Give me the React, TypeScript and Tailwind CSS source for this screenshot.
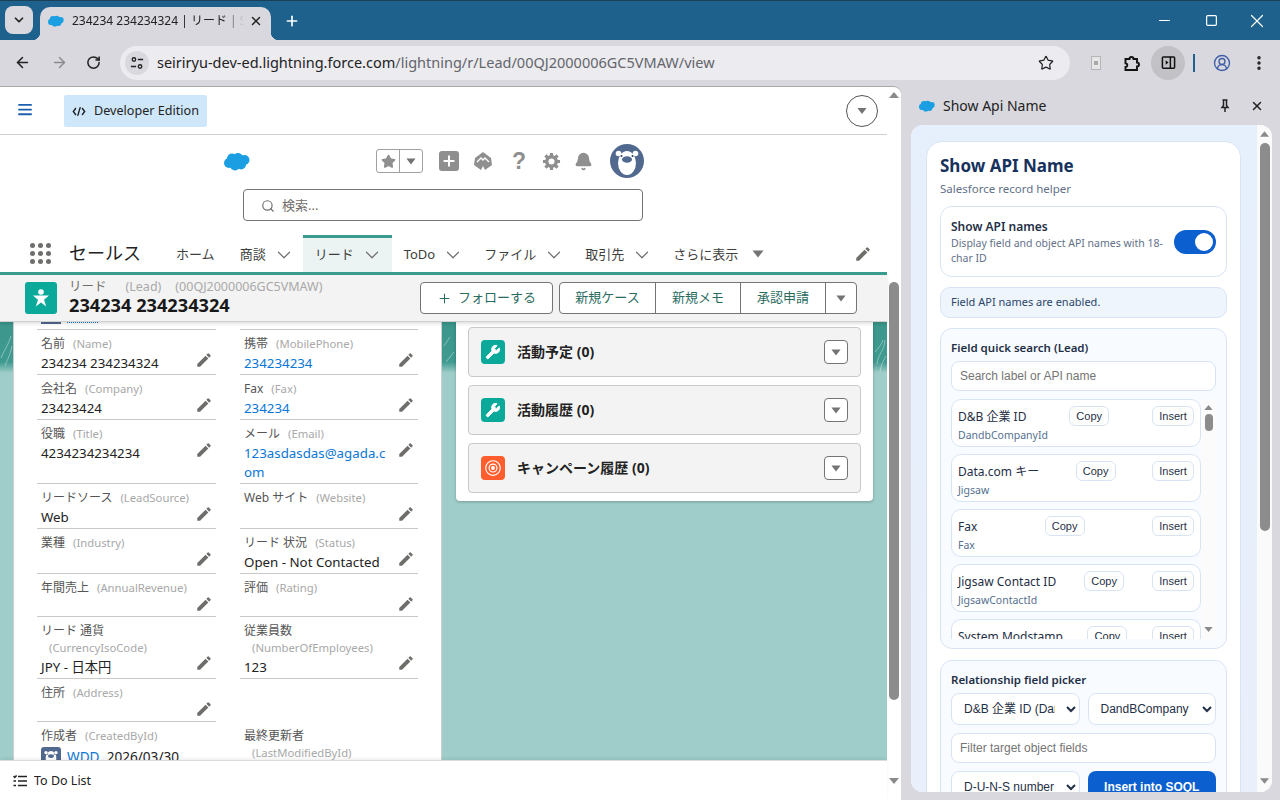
import React from "react";
import {
  ArrowLeft,
  ArrowRight,
  Bell,
  ChevronDown,
  CircleUserRound,
  EllipsisVertical,
  Minus,
  Plus,
  RotateCw,
  Search,
  Square,
  Star,
  Wrench,
  X,
} from "lucide-react";

const uiFont = "font-['Noto_Sans','Noto_Sans_CJK_JP',sans-serif]";
const arialFont = "font-['Liberation_Sans','Noto_Sans_CJK_JP',sans-serif]";

function Cloud({ className }: { className?: string }) {
  return (
    <svg viewBox="0 0 26 19" className={className} fill="#1b9fe2">
      <circle cx="8" cy="6.5" r="5" />
      <circle cx="14" cy="6" r="5" />
      <circle cx="20.5" cy="8" r="5" />
      <circle cx="5" cy="11" r="5" />
      <circle cx="11" cy="13.5" r="5" />
      <circle cx="17" cy="12.5" r="5" />
    </svg>
  );
}

function Caret({ className = "" }: { className?: string }) {
  return (
    <svg viewBox="0 0 12 8" className={className} fill="#747474">
      <path d="M0.5 0.5h11L6 7.5z" />
    </svg>
  );
}

function Pencil() {
  return (
    <svg viewBox="0 0 24 24" className="h-[18px] w-[18px]" fill="#706e6b">
      <path d="M3 17.25V21h3.75L17.81 9.94l-3.75-3.75L3 17.25zM20.71 7.04a1 1 0 0 0 0-1.41l-2.34-2.34a1 1 0 0 0-1.41 0l-1.83 1.83 3.75 3.75 1.83-1.83z" />
    </svg>
  );
}

function Bear({ className }: { className?: string }) {
  return (
    <svg viewBox="0 0 34 34" className={className}>
      <circle cx="17" cy="17" r="17" fill="#51688f" />
      <circle cx="8.5" cy="9.5" r="2.8" fill="#fff" />
      <circle cx="25.5" cy="9.5" r="2.8" fill="#fff" />
      <ellipse cx="17" cy="19" rx="9" ry="12" fill="#fff" />
      <circle cx="11.5" cy="12" r="1" fill="#263a5c" />
      <circle cx="22.5" cy="12" r="1" fill="#263a5c" />
      <ellipse cx="17" cy="15.5" rx="5" ry="3.2" fill="#51688f" />
    </svg>
  );
}

function BrowserBar() {
  return (
    <div className="shrink-0">
      <div className="flex h-10 items-center border-t border-[#1c3f58] bg-[#1d618c]">
        <div className="ml-[5px] mt-[5px] flex h-7 w-7 items-center justify-center self-start rounded-lg bg-[#d9d8de]">
          <ChevronDown size={14} strokeWidth={3} color="#222" />
        </div>
        <div className="relative ml-[7px] flex h-[33px] w-[231px] items-center self-end rounded-t-[10px] bg-[#d9d8de] pb-[6px] pl-2 before:absolute before:-left-2 before:bottom-0 before:h-2 before:w-2 before:bg-[radial-gradient(circle_at_0_0,transparent_8px,#d9d8de_8.5px)] after:absolute after:-right-2 after:bottom-0 after:h-2 after:w-2 after:bg-[radial-gradient(circle_at_100%_0,transparent_8px,#d9d8de_8.5px)]">
          <Cloud className="h-3 w-4" />
          <span className={`${uiFont} ml-2 w-[172px] overflow-hidden whitespace-nowrap text-[12px] text-[#222] [mask-image:linear-gradient(90deg,#000_88%,transparent)]`}>
            234234 234234324 | リード | Salesforce
          </span>
          <X size={14} strokeWidth={2.5} color="#222" className="ml-[5px]" />
        </div>
        <Plus size={16} strokeWidth={2.5} color="#fff" className="ml-[13px]" />
        <div className="ml-auto flex items-center text-white">
          <Minus size={17} strokeWidth={1.7} />
          <Square size={13} strokeWidth={2.2} className="ml-[32px]" />
          <X size={22} strokeWidth={1.3} className="ml-[28px] mr-[12px]" />
        </div>
      </div>
      <div className="flex h-[46px] items-center rounded-t-[10px] bg-[#d9d8de] pb-[1px]">
        <ArrowLeft size={17} strokeWidth={2.2} color="#222" className="ml-[14px]" />
        <ArrowRight size={17} strokeWidth={2} color="#8a8a8e" className="ml-5" />
        <RotateCw size={15} strokeWidth={2.4} color="#222" className="ml-[18px]" />
        <div className="ml-[19px] flex h-[34px] w-[950px] items-center rounded-full bg-[#ecebf0]">
          <div className="ml-[5px] flex h-6 w-6 items-center justify-center rounded-full bg-[#d9d8de]">
            <svg viewBox="0 0 16 16" className="h-[14px] w-[14px]" fill="none" stroke="#222" strokeWidth="1.5">
              <circle cx="4.5" cy="4" r="2" />
              <path d="M9 4h6M1 12h6" />
              <circle cx="11.5" cy="12" r="2" />
            </svg>
          </div>
          <span className={`${uiFont} ml-[8px] text-[14.5px] text-[#222]`}>
            seiriryu-dev-ed.lightning.force.com
            <span className="text-[#63666b]">/lightning/r/Lead/00QJ2000006GC5VMAW/view</span>
          </span>
          <Star size={16} strokeWidth={1.8} color="#222" className="ml-auto mr-4" />
        </div>
        <div className="ml-[21px] flex h-[14px] w-[10px] flex-col items-center justify-center border border-[#b5b5b5] bg-[#e6e6e6]">
          <div className="h-1 w-1 bg-[#aaa]" />
        </div>
        <svg viewBox="0 0 18 18" className="ml-[22px] h-[18px] w-[18px]" fill="none" stroke="#111" strokeWidth="1.9">
          <path d="M2.5 5h4a2 2 0 0 1 4 0h3.5v3.5a2 2 0 0 1 0 4v3.5H2.5v-3a1.8 1.8 0 0 0 0-3.6z" />
        </svg>
        <div className="ml-[10px] flex h-[34px] w-[34px] items-center justify-center rounded-full bg-[#c2c1c6]">
          <svg viewBox="0 0 16 16" className="h-[15px] w-[15px]" fill="none" stroke="#111" strokeWidth="1.6">
            <rect x="1.5" y="2" width="13" height="12" rx="1" />
            <path d="M10 2v12" />
            <path d="M5 5.5l3 2.5-3 2.5z" fill="#111" stroke="none" />
          </svg>
        </div>
        <div className="ml-[8px] h-[18px] w-[2px] bg-[#1d618c]" />
        <CircleUserRound size={18} strokeWidth={1.8} color="#3f5fa8" className="ml-[18px]" />
        <EllipsisVertical size={18} strokeWidth={2.6} color="#222" className="ml-[19px]" />
      </div>
    </div>
  );
}

function NavItem({ label, active, caret }: { label: string; active?: boolean; caret?: boolean }) {
  return (
    <div
      className={`flex h-[37px] items-center gap-[7px] border-t-[3px] pb-[1px] pl-[12px] text-[13px] text-[#3e3e3c] ${
        caret ? "pr-[8px]" : "pr-[13px]"
      } ${active ? "border-[#3a9c8f] bg-[#ecf4f3] pr-[9px]" : "border-transparent"}`}
    >
      <span>{label}</span>
      {caret && <ChevronDown size={22} strokeWidth={1.3} color="#706e6b" />}
    </div>
  );
}

function TopHeader() {
  return (
    <div className="shrink-0 bg-white">
      <div className="flex h-[48px] items-center border-b border-[#cfcfcf]">
        <svg viewBox="0 0 16 14" className="ml-[18px] h-[13px] w-[15px]" fill="#1b5fae">
          <rect y="0" width="15" height="2" rx="1" />
          <rect y="5" width="15" height="2" rx="1" />
          <rect y="10" width="15" height="2" rx="1" />
        </svg>
        <div className="ml-[31px] flex h-8 w-[143px] items-center rounded-[2px] bg-[#cfe7fb] pl-[8px] pt-[2px] text-[12.6px] text-[#222]">
          <svg viewBox="0 0 16 12" className="h-[11px] w-[14px]" fill="none" stroke="#222" strokeWidth="1.6">
            <path d="M4.5 2L1.5 6l3 4M11.5 2l3 4-3 4M9.5 1L6.5 11" />
          </svg>
          <span className="ml-2">Developer Edition</span>
        </div>
        <div className="ml-auto mr-[9px] flex h-8 w-8 items-center justify-center rounded-full border border-[#555] bg-white">
          <Caret className="h-[8px] w-[10px]" />
        </div>
      </div>
      <div className="flex h-[54px] items-center pb-[2px]">
        <Cloud className="ml-[224px] h-[19px] w-[26px]" />
        <div className="ml-[126px] flex h-6 w-[47px] items-center rounded-[3px] border border-[#a0a0a0]">
          <div className="flex h-full w-[23px] items-center justify-center border-r border-[#a0a0a0]">
            <Star size={15} fill="#8f8f8f" color="#8f8f8f" />
          </div>
          <Caret className="ml-[6px] h-[7px] w-[10px]" />
        </div>
        <div className="ml-4 flex h-5 w-5 items-center justify-center rounded-[3px] bg-[#8f8f8f]">
          <Plus size={16} strokeWidth={3} color="#fff" />
        </div>
        <svg viewBox="0 0 20 20" className="ml-[14px] h-5 w-5" fill="#8f8f8f">
          <path d="M10 1l8 6 1 7-7 5-2-4-2 4-7-5 1-7z" />
          <path d="M4 11l4-4 2 2 2-2 4 4" fill="none" stroke="#fff" strokeWidth="1.3" />
        </svg>
        <span className={`${arialFont} ml-[19px] text-[23px] font-bold leading-none text-[#8f8f8f]`}>?</span>
        <svg viewBox="0 0 20 20" className="ml-[16px] h-[19px] w-[19px]">
          <g stroke="#8f8f8f" strokeWidth="3.4">
            <path d="M10 1v18M1 10h18M3.6 3.6l12.8 12.8M16.4 3.6L3.6 16.4" />
          </g>
          <circle cx="10" cy="10" r="6.8" fill="#8f8f8f" />
          <circle cx="10" cy="10" r="3.2" fill="#fff" />
        </svg>
        <Bell size={19} fill="#8f8f8f" color="#8f8f8f" className="ml-[13px]" />
        <Bear className="ml-[17px] h-[34px] w-[34px]" />
      </div>
      <div className="flex h-[46px] items-start">
        <div className="ml-[243px] flex h-[32px] w-[400px] items-center rounded-[4px] border border-[#747474] pl-[17px] pt-[1px] text-[13px] text-[#706e6b]">
          <Search size={14} strokeWidth={2} color="#706e6b" />
          <span className="ml-[7px]">検索...</span>
        </div>
      </div>
      <div className="box-content flex h-[37px] items-center border-b-[3px] border-[#3a9c8f]">
        <div className="ml-[30px] grid grid-cols-3 gap-[3px]">
          {Array.from({ length: 9 }).map((_, i) => (
            <div key={i} className="h-[5px] w-[5px] rounded-full bg-[#706e6b]" />
          ))}
        </div>
        <span className="ml-[18px] w-[95px] text-[18px] text-[#222]">セールス</span>
        <NavItem label="ホーム" />
        <NavItem label="商談" caret />
        <NavItem label="リード" active caret />
        <NavItem label="ToDo" caret />
        <NavItem label="ファイル" caret />
        <NavItem label="取引先" caret />
        <NavItem label="さらに表示" />
        <Caret className="ml-[1px] h-[8px] w-[12px]" />
        <div className="ml-auto mr-[15px]">
          <Pencil />
        </div>
      </div>
    </div>
  );
}

function Highlights() {
  const btn = "flex h-8 items-center justify-center text-[13px] text-[#2a6b60]";
  return (
    <div className="relative z-10 flex h-[47px] shrink-0 items-center border-b border-[#d0d0d0] bg-[#f3f3f3] shadow-[0_2px_3px_rgba(0,0,0,0.12)]">
      <div className="ml-[25px] flex h-8 w-8 items-center justify-center rounded-[3px] bg-[#0ba99a]">
        <svg viewBox="0 0 20 20" className="h-5 w-5" fill="#fff">
          <circle cx="10" cy="4" r="2.8" />
          <path d="M2 7.5h16l-5 4.2 2.2 6.8L10 14.6l-5.2 3.9L7 11.7z" />
        </svg>
      </div>
      <div className="ml-3 w-[340px] pb-[1px]">
        <div className="flex h-[15px] items-center text-[12.5px] text-[#8a8a8a]">
          <span className="text-[#706e6b]">リード</span>
          <span className="ml-[19px] text-[#a9a9a9]">(Lead)</span>
          <span className="ml-[14px] text-[#a9a9a9]">(00QJ2000006GC5VMAW)</span>
        </div>
        <div className="text-[18.2px] font-bold leading-[20px] text-[#181818]">234234 234234324</div>
      </div>
      <div className={`${btn} ml-[11px] w-[133px] rounded-[4px] border border-[#747474] bg-white`}>
        <Plus size={15} strokeWidth={1.6} color="#2a6b60" />
        <span className="ml-[6px]">フォローする</span>
      </div>
      <div className="ml-[6px] flex h-8 rounded-[4px] border border-[#747474] bg-white">
        <div className={`${btn} h-full w-[96px] border-r border-[#747474]`}>新規ケース</div>
        <div className={`${btn} h-full w-[85px] border-r border-[#747474]`}>新規メモ</div>
        <div className={`${btn} h-full w-[85px] border-r border-[#747474]`}>承認申請</div>
        <div className="flex h-full w-[30px] items-center justify-center">
          <Caret className="h-[7px] w-[10px]" />
        </div>
      </div>
    </div>
  );
}

type FieldProps = {
  label: string;
  api: string;
  value?: string;
  link?: boolean;
  height: string;
  apiBelow?: boolean;
};

function Field({ label, api, value, link, height, apiBelow }: FieldProps) {
  return (
    <div className={`flex ${height} justify-between border-b border-[#c9c9c9] pl-1 pt-[5px]`}>
      <div className="w-[150px] min-w-0">
        <div className="whitespace-nowrap text-[12px] leading-[17px] text-[#555]">
          {label}
          {apiBelow ? (
            <div className="pl-2 text-[11.3px] text-[#a8a8a8]">{api}</div>
          ) : (
            <span className="ml-2 text-[11.3px] text-[#a8a8a8]">{api}</span>
          )}
        </div>
        {value && (
          <div className={`mt-[2px] w-[143px] break-all text-[13.3px] leading-[19px] ${link ? "text-[#0b76d6]" : "text-[#222]"}`}>
            {value}
          </div>
        )}
      </div>
      <div className={`mr-[3px] ${apiBelow ? "mt-[32px]" : "mt-[16px]"}`}>
        <Pencil />
      </div>
    </div>
  );
}

function RecordCard() {
  return (
    <div className="relative ml-[13px] h-full w-[429px] shrink-0 overflow-hidden border-x border-[#cfcfcf] bg-white pl-[23px]">
      <div className="flex h-[2px] items-start pl-1">
        <div className="h-[2px] w-5 bg-[#51688f]" />
        <div className="ml-[6px] h-[1px] w-[31px] border-b border-dotted border-[#0b76d6]" />
      </div>
      <div className="mt-[6px] grid w-[381px] grid-cols-[179px_178px] gap-x-6 [&>*:nth-child(-n+2)]:shadow-[0_-1px_0_#c9c9c9]">
        <Field height="h-[45px]" label="名前" api="(Name)" value="234234 234234324" />
        <Field height="h-[45px]" label="携帯" api="(MobilePhone)" value="234234234" link />
        <Field height="h-[45px]" label="会社名" api="(Company)" value="23423424" />
        <Field height="h-[45px]" label="Fax" api="(Fax)" value="234234" link />
        <Field height="h-[64px]" label="役職" api="(Title)" value="4234234234234" />
        <Field height="h-[64px]" label="メール" api="(Email)" value="123asdasdas@agada.com" link />
        <Field height="h-[45px]" label="リードソース" api="(LeadSource)" value="Web" />
        <Field height="h-[45px]" label="Web サイト" api="(Website)" />
        <Field height="h-[45px]" label="業種" api="(Industry)" />
        <Field height="h-[45px]" label="リード 状況" api="(Status)" value="Open - Not Contacted" />
        <Field height="h-[43px]" label="年間売上" api="(AnnualRevenue)" />
        <Field height="h-[43px]" label="評価" api="(Rating)" />
        <Field height="h-[62px]" label="リード 通貨" api="(CurrencyIsoCode)" value="JPY - 日本円" apiBelow />
        <Field height="h-[62px]" label="従業員数" api="(NumberOfEmployees)" value="123" apiBelow />
        <Field height="h-[43px]" label="住所" api="(Address)" />
        <div className="h-[43px]" />
        <div className="pl-1 pt-[5px]">
          <div className="whitespace-nowrap text-[12px] leading-[17px] text-[#555]">
            作成者<span className="ml-2 text-[11.3px] text-[#a8a8a8]">(CreatedById)</span>
          </div>
          <div className="mt-[3px] flex items-center text-[13.6px] text-[#222]">
            <Bear className="h-5 w-5 rounded-[3px] bg-[#51688f]" />
            <span className="ml-[6px] text-[#0b76d6]">WDD</span>, 2026/03/30
          </div>
        </div>
        <div className="pl-1 pt-[5px] text-[12px] leading-[17px] text-[#555]">
          最終更新者
          <div className="pl-2 text-[11.3px] text-[#a8a8a8]">(LastModifiedById)</div>
        </div>
      </div>
    </div>
  );
}

function RelatedRow({ title, target }: { title: string; target?: boolean }) {
  return (
    <div className="flex h-[50px] items-center rounded-[4px] border border-[#c9c9c9] bg-[#f3f3f3]">
      {target ? (
        <div className="ml-3 flex h-6 w-6 items-center justify-center rounded-[4px] bg-[#ff5d2d]">
          <svg viewBox="0 0 16 16" className="h-[18px] w-[18px]" fill="none" stroke="#fff" strokeWidth="1">
            <circle cx="8" cy="8" r="6.5" />
            <circle cx="8" cy="8" r="3.5" />
            <circle cx="8" cy="8" r="1.2" fill="#fff" />
          </svg>
        </div>
      ) : (
        <div className="ml-3 flex h-6 w-6 items-center justify-center rounded-[4px] bg-[#0ba99a]">
          <Wrench size={16} fill="#fff" color="#fff" strokeWidth={1.5} />
        </div>
      )}
      <span className="ml-3 pb-[2px] text-[14px] font-bold text-[#222]">{title}</span>
      <div className="ml-auto mr-3 flex h-6 w-6 items-center justify-center rounded-[4px] border border-[#747474] bg-white">
        <Caret className="h-[7px] w-[10px]" />
      </div>
    </div>
  );
}

function PageScrollbar() {
  return (
    <div className="flex w-[14px] shrink-0 flex-col items-center bg-white pt-[5px]">
      <svg viewBox="0 0 10 6" className="h-[6px] w-[10px]" fill="#8a8a8a">
        <path d="M5 0l5 6H0z" />
      </svg>
      <div className="mt-[184px] h-[418px] w-[10px] rounded-full bg-[#8c8c8c]" />
      <svg viewBox="0 0 10 6" className="mt-[78px] h-[6px] w-[10px]" fill="#8a8a8a">
        <path d="M5 6l5-6H0z" />
      </svg>
    </div>
  );
}

function LeftPage() {
  return (
    <div className={`${uiFont} flex w-[901px] shrink-0 overflow-hidden rounded-tr-[8px] border-t border-[#aaa]`}>
      <div className="flex min-w-0 flex-1 flex-col">
        <TopHeader />
        <Highlights />
        <div className="relative flex min-h-0 flex-1 items-start overflow-hidden bg-[linear-gradient(#3c968c_0,#3f9a90_40px,#9fcdc9_51px)]">
          {/* sketch lines of the page background, seen in the gaps between the cards */}
          <svg viewBox="0 0 887 60" className="absolute left-0 top-0 h-[60px] w-[887px]" fill="none" stroke="#ffffff" strokeOpacity="0.55" strokeWidth="0.7">
            <path d="M1 36c3-8 7-12 10-22M5 44c2-6 5-10 7-20" />
            <path d="M444 24l6-9M446 40l8-10" />
            <path d="M875 30c3-4 6-6 8-12M877 42c1-10 7-12 8-24M880 50c1-8 4-12 6-16" />
          </svg>
          <RecordCard />
          <div className="relative ml-[14px] w-[417px] rounded-b-[4px] bg-white px-3 pb-2 pt-[5px] shadow-[0_1px_3px_rgba(0,0,0,0.25)]">
            <div className="flex flex-col gap-2">
              <RelatedRow title="活動予定 (0)" />
              <RelatedRow title="活動履歴 (0)" />
              <RelatedRow title="キャンペーン履歴 (0)" target />
            </div>
          </div>
        </div>
        <div className="relative z-10 flex h-10 shrink-0 items-center border-t border-[#dcdcdc] bg-white pt-[1px] text-[12.5px] text-[#222] shadow-[0_-2px_3px_rgba(0,0,0,0.06)]">
          <svg viewBox="0 0 14 12" className="ml-[13px] h-3 w-[14px]" fill="none" stroke="#222" strokeWidth="1.5">
            <path d="M5 1.5h9M5 6h9M5 10.5h9M0.5 1l1.3 1.4L3.6 0.4M0.5 6h2.5M0.5 10.5h2.5" />
          </svg>
          <span className="ml-[7px]">To Do List</span>
        </div>
      </div>
      <PageScrollbar />
    </div>
  );
}

function MiniButton({ label, width }: { label: string; width: string }) {
  return (
    <div
      className={`flex h-5 ${width} items-center justify-center rounded-[6px] border border-[#d8e4f3] bg-white text-[11px] text-[#1f2f46] ${arialFont}`}
    >
      {label}
    </div>
  );
}

function FieldRow({ label, api }: { label: string; api: string }) {
  return (
    <div className="flex h-12 shrink-0 justify-between rounded-[10px] border border-[#d8e4f3] bg-white px-[6px] pt-[6px]">
      <div className="pt-[2px]">
        <div className="whitespace-nowrap text-[12px] leading-[17px] text-[#1f2f46]">{label}</div>
        <div className="mt-[3px] w-0 whitespace-nowrap text-[10.5px] leading-[15px] text-[#55708f]">{api}</div>
      </div>
      <MiniButton label="Copy" width="w-10" />
      <MiniButton label="Insert" width="w-[42px]" />
    </div>
  );
}

function SidePanel() {
  const inputCls = `h-[30px] w-full rounded-[8px] border border-[#d8e4f3] bg-white px-2 text-[12px] text-[#222] placeholder:text-[#757575] outline-none ${arialFont}`;
  const selectCls = `h-8 min-w-0 rounded-[8px] border border-[#d8e4f3] bg-white pl-2 pr-2 text-[12px] text-[#1f2f46] outline-none ${arialFont}`;
  return (
    <div className={`${uiFont} flex min-w-0 flex-1 flex-col pb-2 pl-[10px] pr-2`}>
      <div className="flex h-[39px] shrink-0 items-center text-[14px] text-[#222]">
        <Cloud className="ml-[8px] h-[12px] w-4" />
        <span className="ml-2">Show Api Name</span>
        <svg viewBox="0 0 12 14" className="ml-auto h-[14px] w-3" fill="none" stroke="#222" strokeWidth="1.5">
          <path d="M3.5 1h5M4.5 1v5.5L3 8.5h6L7.5 6.5V1M6 8.5V13" />
        </svg>
        <X size={14} strokeWidth={2.5} color="#222" className="ml-[19px] mr-[8px]" />
      </div>
      <div className="flex min-h-0 flex-1 overflow-hidden rounded-[12px] bg-white">
        <div className="min-w-0 flex-1 overflow-hidden bg-[linear-gradient(#e6effc,#e9effb)] pl-[15px] pr-4 pt-[16px]">
          <div className="h-[680px] rounded-t-[16px] border border-[#d8e4f3] bg-white px-[13px] pt-[13px]">
            <div className="text-[17px] font-bold leading-[22px] text-[#16325c]">Show API Name</div>
            <div className="mt-[3px] text-[11.5px] leading-[17px] text-[#5f7189]">Salesforce record helper</div>
            <div className="mt-[9px] flex h-[71px] items-center rounded-[12px] border border-[#d8e4f3] px-[10px]">
              <div className="w-[212px]">
                <div className="text-[12px] font-semibold leading-[17px] text-[#1f2f46]">Show API names</div>
                <div className="mt-[1px] text-[10.5px] leading-[15px] text-[#5f7189]">
                  Display field and object API names with 18-char ID
                </div>
              </div>
              <div className="ml-auto flex h-6 w-[42px] items-center justify-end rounded-full bg-[#0b5fce] pr-[3px]">
                <div className="h-[18px] w-[18px] rounded-full bg-white" />
              </div>
            </div>
            <div className="mt-[10px] flex h-[31px] items-center rounded-[10px] border border-[#d8e4f3] bg-[#eef5fd] pl-[10px] text-[11px] text-[#2c4668]">
              Field API names are enabled.
            </div>
            <div className="mt-[10px] h-[321px] rounded-[12px] border border-[#d8e4f3] bg-[#f8fbff] px-[10px] pt-[10px]">
              <div className="text-[11.5px] font-semibold leading-[17px] text-[#1f2f46]">Field quick search (Lead)</div>
              <input className={`${inputCls} mt-[5px]`} placeholder="Search label or API name" readOnly />
              <div className="mt-2 flex h-[240px] overflow-hidden">
                <div className="flex w-[250px] flex-col gap-[7px] overflow-hidden">
                  <FieldRow label="D&B 企業 ID" api="DandbCompanyId" />
                  <FieldRow label="Data.com キー" api="Jigsaw" />
                  <FieldRow label="Fax" api="Fax" />
                  <FieldRow label="Jigsaw Contact ID" api="JigsawContactId" />
                  <FieldRow label="System Modstamp" api="SystemModstamp" />
                </div>
                <div className="flex w-[15px] flex-col items-center bg-[#fbfbfb] pt-[6px]">
                  <svg viewBox="0 0 10 6" className="h-[5px] w-[9px]" fill="#8a8a8a">
                    <path d="M5 0l5 6H0z" />
                  </svg>
                  <div className="mt-[4px] h-[17px] w-2 rounded-full bg-[#8c8c8c]" />
                  <svg viewBox="0 0 10 6" className="mt-[196px] h-[5px] w-[9px]" fill="#8a8a8a">
                    <path d="M5 6l5-6H0z" />
                  </svg>
                </div>
              </div>
            </div>
            <div className="mt-[11px] rounded-[12px] border border-[#d8e4f3] bg-[#f8fbff] px-[10px] pb-3 pt-[10px]">
              <div className="text-[11.5px] font-semibold leading-[17px] text-[#1f2f46]">Relationship field picker</div>
              <div className="mt-[5px] grid grid-cols-2 gap-2">
                <select className={selectCls} defaultValue="a">
                  <option value="a">D&B 企業 ID (DandbCompanyId)</option>
                </select>
                <select className={selectCls} defaultValue="a">
                  <option value="a">DandBCompany</option>
                </select>
              </div>
              <input className={`${inputCls} mt-2`} placeholder="Filter target object fields" readOnly />
              <div className="mt-2 grid grid-cols-2 gap-2">
                <select className={selectCls} defaultValue="a">
                  <option value="a">D-U-N-S number</option>
                </select>
                <div className={`flex h-8 items-center justify-center rounded-[8px] bg-[#0b5fce] text-[12px] font-bold text-white ${arialFont}`}>
                  Insert into SOQL
                </div>
              </div>
            </div>
          </div>
        </div>
        <div className="flex w-[15px] shrink-0 flex-col items-center bg-[#fafafa] pt-[6px]">
          <svg viewBox="0 0 10 6" className="h-[6px] w-[9px]" fill="#8a8a8a">
            <path d="M5 0l5 6H0z" />
          </svg>
          <div className="mt-[6px] h-[388px] w-[10px] rounded-full bg-[#8c8c8c]" />
          <svg viewBox="0 0 10 6" className="mt-[247px] h-[6px] w-[9px]" fill="#8a8a8a">
            <path d="M5 6l5-6H0z" />
          </svg>
        </div>
      </div>
    </div>
  );
}

export default function App() {
  return (
    <div className="flex h-[800px] w-[1280px] flex-col overflow-hidden bg-[#d9d8de]">
      <BrowserBar />
      <div className="flex min-h-0 flex-1">
        <LeftPage />
        <SidePanel />
      </div>
    </div>
  );
}
